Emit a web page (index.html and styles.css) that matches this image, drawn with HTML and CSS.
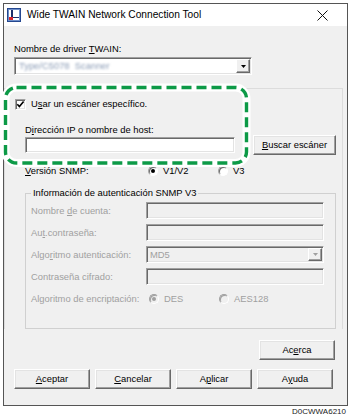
FILE: index.html
```html
<!DOCTYPE html>
<html>
<head>
<meta charset="utf-8">
<link rel="stylesheet" href="styles.css">
</head>
<body>
<div class="window">
  <div class="titlebar">
    <svg class="appicon" width="14" height="14" viewBox="0 0 14 14">
      <rect x="0.5" y="0.5" width="13" height="13" fill="#ffffff" stroke="#24478f"/>
      <rect x="1.5" y="1.5" width="11" height="11" fill="none" stroke="#6f8fc9"/>
      <rect x="4" y="2" width="2" height="8" fill="#1d2f6b"/>
      <rect x="2" y="9" width="10" height="1" fill="#1d2f6b"/>
      <rect x="2" y="9" width="4" height="3" fill="#d8262c"/>
    </svg>
    <span class="title">Wide TWAIN Network Connection Tool</span>
    <svg class="close" width="11" height="11" viewBox="0 0 11 11">
      <path d="M0.5 0.5 L10.5 10.5 M10.5 0.5 L0.5 10.5" stroke="#111" stroke-width="1" fill="none"/>
    </svg>
  </div>
  <div class="content">
    <div class="label driver-label">Nombre de driver <u>T</u>WAIN:</div>
    <div class="combo driver-combo">
      <span class="blurred">Type/C5078 &nbsp;Scanner</span>
      <span class="combo-btn"><svg width="5" height="3" viewBox="0 0 5 3"><path d="M0 0 H5 L2.5 3 Z" fill="#000"/></svg></span>
    </div>
    <div class="outer-group">
      <div class="check-row">
        <span class="checkbox"><svg width="9" height="9" viewBox="0 0 9 9"><path d="M1.3 4.3 L3.4 6.6 L7.6 1.6" stroke="#000" stroke-width="1.6" fill="none"/></svg></span>
        <span>U<u>s</u>ar un escáner específico.</span>
      </div>
      <div class="label ip-label">D<u>i</u>rección IP o nombre de host:</div>
      <div class="ip-row">
        <div class="field ip-input"></div>
        <div class="button buscar"><u>B</u>uscar escáner</div>
      </div>
      <div class="snmp-row">
        <span class="snmp-label"><u>V</u>ersión SNMP:</span>
        <span class="opt"><span class="radio checked"></span><span>V1/V2</span></span>
        <span class="opt"><span class="radio"></span><span>V3</span></span>
      </div>
      <fieldset class="snmp-group">
        <legend>Información de autenticación SNMP V3</legend>
        <div class="snmp-grid">
          <span class="dis">Nombre <u>d</u>e cuenta:</span>
          <div class="field disabled"></div>
          <span class="dis">Au<u>t</u>.contraseña:</span>
          <div class="field disabled"></div>
          <span class="dis">Algo<u>r</u>itmo autenticación:</span>
          <div class="field disabled md5">
            <span class="md5-text">MD5</span>
            <span class="combo-btn dis-btn"><svg width="5" height="3" viewBox="0 0 5 3"><path d="M0 0 H5 L2.5 3 Z" fill="#a0a0a0"/></svg></span>
          </div>
          <span class="dis">Contraseña cifrado:</span>
          <div class="field disabled"></div>
        </div>
        <div class="enc-row">
          <span class="dis enc-label">Algoritmo de encriptación:</span>
          <span class="opt"><span class="radio checked disabled-radio"></span><span class="dis">DES</span></span>
          <span class="opt"><span class="radio disabled-radio"></span><span class="dis">AES128</span></span>
        </div>
      </fieldset>
    </div>
    <div class="acerca-row">
      <div class="button">Ac<u>e</u>rca</div>
    </div>
    <div class="btn-row">
      <div class="button"><u>A</u>ceptar</div>
      <div class="button"><u>C</u>ancelar</div>
      <div class="button">A<u>p</u>licar</div>
      <div class="button">A<u>y</u>uda</div>
    </div>
  </div>
</div>
<div class="code">D0CWWA6210</div>
<svg class="highlight" width="254" height="88" viewBox="0 0 254 88">
  <rect x="5.5" y="5.5" width="241" height="75.5" rx="11" ry="11" fill="none" stroke="#ffffff" stroke-width="8"/>
  <rect x="5.5" y="5.5" width="241" height="75.5" rx="11" ry="11" fill="none" stroke="#0d9a47" stroke-width="3.4" stroke-dasharray="10 5"/>
</svg>
</body>
</html>
```
FILE: styles.css
```css
* { box-sizing: border-box; }
html, body { margin: 0; padding: 0; }
body {
  position: relative;
  width: 350px;
  height: 420px;
  overflow: hidden;
  background: #ffffff;
  font-family: "Liberation Sans", Arial, sans-serif;
  font-size: 9.4px;
  line-height: 12px;
  color: #000;
}
u { text-decoration-thickness: 1px; text-underline-offset: 1px; }

.window {
  margin: 3px 0 0 3px;
  width: 345px;
  height: 403px;
  border: 1px solid #555;
  background: #f0f0f0;
  display: flex;
  flex-direction: column;
}
.titlebar {
  height: 22px;
  background: #fff;
  display: flex;
  align-items: center;
  flex: none;
}
.appicon { margin-left: 3px; flex: none; }
.title { margin-left: 6px; font-size: 10.2px; color: #000; }
.close { margin-left: auto; margin-right: 19px; }

.content {
  flex: 1;
  display: flex;
  flex-direction: column;
  padding: 0 12px 0 10px;
}
.label { height: 12px; }
.driver-label { margin-top: 17px; }

.combo {
  position: relative;
  display: flex;
  align-items: center;
  height: 18px;
  border: 1px solid;
  border-color: #a0a0a0 #fff #fff #a0a0a0;
  box-shadow: inset 1px 1px 0 #696969, inset -1px -1px 0 #e3e3e3;
  background: #fff;
}
.driver-combo { margin-top: 2px; width: 238px; }
.blurred {
  margin-left: 4px;
  color: #8a9bb5;
  filter: blur(0.8px);
  font-size: 9.4px;
}
.combo-btn {
  margin-left: auto;
  margin-right: 1px;
  width: 14px;
  height: 14px;
  display: flex;
  align-items: center;
  justify-content: center;
  background: #f0f0f0;
  border: 1px solid;
  border-color: #fff #696969 #696969 #fff;
  box-shadow: inset -1px -1px 0 #a0a0a0;
}

.outer-group {
  margin: 13px -8px 0 -10px;
  border-top: 1px solid #dcdcdc;
  border-left: 1px solid #dcdcdc;
  border-right: 1px solid #dcdcdc;
  padding: 0 6px 0 10px;
  display: flex;
  flex-direction: column;
}
.check-row {
  margin-top: 9px;
  height: 12px;
  display: flex;
  align-items: center;
  gap: 5px;
}
.checkbox {
  width: 11px;
  height: 11px;
  background: #fff;
  border: 1px solid;
  border-color: #a0a0a0 #fff #fff #a0a0a0;
  box-shadow: inset 1px 1px 0 #696969, inset -1px -1px 0 #e3e3e3;
  display: flex;
  align-items: center;
  justify-content: center;
}
.ip-label { margin-top: 14px; margin-left: 10px; }
.ip-row {
  margin-top: -1px;
  margin-left: 10px;
  height: 20px;
  display: flex;
  align-items: center;
}
.field {
  height: 16px;
  background: #fff;
  border: 1px solid;
  border-color: #a0a0a0 #fff #fff #a0a0a0;
  box-shadow: inset 1px 1px 0 #696969, inset -1px -1px 0 #e3e3e3;
}
.ip-input { width: 210px; }

.button {
  height: 20px;
  display: flex;
  align-items: center;
  justify-content: center;
  background: #f0f0f0;
  border: 1px solid;
  border-color: #fff #696969 #696969 #fff;
  box-shadow: inset -1px -1px 0 #a0a0a0, inset 1px 1px 0 #e3e3e3;
}
.buscar { margin-left: auto; width: 83px; }

.snmp-row {
  margin-top: 10px;
  margin-left: 10px;
  height: 12px;
  display: flex;
  align-items: center;
}
.snmp-label { width: 123px; }
.opt {
  width: 70px;
  display: flex;
  align-items: center;
  gap: 5px;
}
.radio {
  position: relative;
  width: 10px;
  height: 10px;
  border-radius: 50%;
  background: #fff;
  border: 1px solid;
  border-color: #a0a0a0 #fff #fff #a0a0a0;
  box-shadow: inset 1px 1px 0 #696969;
  flex: none;
}
.radio.checked::after {
  content: "";
  position: absolute;
  left: 2px;
  top: 2px;
  width: 4px;
  height: 4px;
  border-radius: 50%;
  background: #000;
}
.radio.disabled-radio { background: #f0f0f0; box-shadow: inset 1px 1px 0 #a0a0a0; }
.radio.disabled-radio.checked::after { background: #a0a0a0; }

.snmp-group {
  margin: 10px 0 0 10px;
  padding: 3px 10px 23px 5px;
  border: 1px solid #d0d0d0;
  min-width: 0;
}
.snmp-group legend {
  padding: 0 2px;
  line-height: 12px;
  color: #000;
}
.snmp-grid {
  display: grid;
  grid-template-columns: 115px 178px;
  grid-auto-rows: 17px;
  row-gap: 5px;
  align-items: center;
}
.snmp-grid .field { height: 17px; }
.dis { color: #a0a0a0; }
.field.disabled { background: #f0f0f0; }
.md5 { display: flex; align-items: center; }
.md5-text { margin-left: 3px; color: #a0a0a0; }
.dis-btn { height: 13px; }
.enc-row {
  margin-top: 8px;
  height: 12px;
  display: flex;
  align-items: center;
}
.enc-label { width: 118px; }

.acerca-row {
  margin-top: 11px;
  display: flex;
  justify-content: flex-end;
}
.acerca-row .button { width: 76px; }
.btn-row {
  margin-top: 9px;
  display: flex;
  gap: 5px;
}
.btn-row .button { width: 76px; }

.code {
  margin-top: 1px;
  padding-right: 4px;
  text-align: right;
  font-size: 8px;
  line-height: 10px;
  color: #222;
}
.highlight {
  position: absolute;
  left: 0;
  top: 82px;
}
```
